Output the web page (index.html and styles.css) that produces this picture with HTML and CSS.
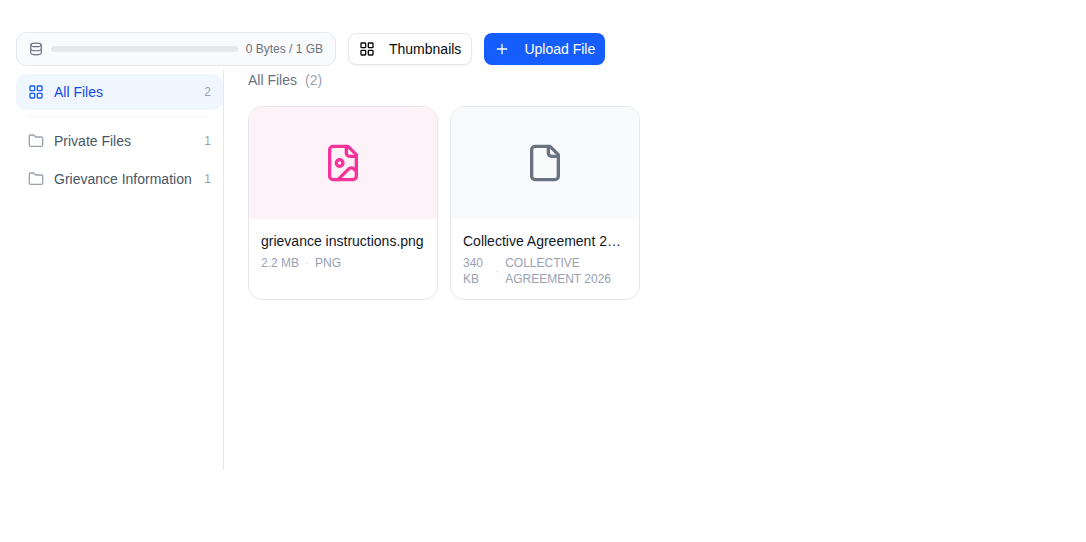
FILE: index.html
```html
<!DOCTYPE html>
<html lang="en">
<head>
<meta charset="utf-8">
<title>Files</title>
<link rel="stylesheet" href="styles.css">
</head>
<body>
<svg class="sprite" aria-hidden="true">
  <symbol id="grid" viewBox="0 0 24 24"><rect width="7" height="7" x="3" y="3" rx="1"/><rect width="7" height="7" x="14" y="3" rx="1"/><rect width="7" height="7" x="14" y="14" rx="1"/><rect width="7" height="7" x="3" y="14" rx="1"/></symbol>
  <symbol id="folder" viewBox="0 0 24 24"><path d="M20 20a2 2 0 0 0 2-2V8a2 2 0 0 0-2-2h-7.900a2 2 0 0 1-1.690-.9L9.600 3.900A2 2 0 0 0 7.930 3H4a2 2 0 0 0-2 2v13a2 2 0 0 0 2 2Z"/></symbol>
</svg>
<header class="toolbar">
  <div class="storage">
    <svg class="icon icon-small" viewBox="0 0 24 24"><ellipse cx="12" cy="5" rx="9" ry="3"/><path d="M3 5v14a9 3 0 0 0 18 0V5"/><path d="M3 12a9 3 0 0 0 18 0"/></svg>
    <div class="meter" role="progressbar" aria-label="Storage used" aria-valuenow="0"></div>
    <span class="storage-text">0 Bytes / 1 GB</span>
  </div>
  <button class="button" type="button"><svg class="icon"><use href="#grid"/></svg>Thumbnails</button>
  <button class="button button-primary" type="button"><svg class="icon" viewBox="0 0 24 24"><path d="M5 12h14M12 5v14"/></svg>Upload File</button>
</header>
<div class="browser">
  <nav class="sidebar" aria-label="Folders">
    <button class="folder folder-active" type="button"><svg class="icon"><use href="#grid"/></svg><span class="folder-name">All Files</span><span class="count">2</span></button>
    <hr class="divider">
    <button class="folder" type="button"><svg class="icon"><use href="#folder"/></svg><span class="folder-name">Private Files</span><span class="count">1</span></button>
    <button class="folder" type="button"><svg class="icon"><use href="#folder"/></svg><span class="folder-name">Grievance Information</span><span class="count">1</span></button>
  </nav>
  <main class="content">
    <h1 class="heading">All Files <span class="total">(2)</span></h1>
    <div class="cards">
      <article class="card">
        <div class="preview preview-image"><svg class="icon icon-large" viewBox="0 0 24 24"><path d="M15 2H6a2 2 0 0 0-2 2v16a2 2 0 0 0 2 2h12a2 2 0 0 0 2-2V7Z"/><path d="M14 2v4a2 2 0 0 0 2 2h4"/><circle cx="10" cy="12" r="2"/><path d="m20 17-1.296-1.296a2.410 2.410 0 0 0-3.408 0L9 22"/></svg></div>
        <div class="info">
          <h2 class="name">grievance instructions.png</h2>
          <div class="meta"><span>2.2 MB</span><span class="dot">·</span><span>PNG</span></div>
        </div>
      </article>
      <article class="card">
        <div class="preview"><svg class="icon icon-large" viewBox="0 0 24 24"><path d="M15 2H6a2 2 0 0 0-2 2v16a2 2 0 0 0 2 2h12a2 2 0 0 0 2-2V7Z"/><path d="M14 2v4a2 2 0 0 0 2 2h4"/></svg></div>
        <div class="info">
          <h2 class="name">Collective Agreement 2026</h2>
          <div class="meta"><span>340 KB</span><span class="dot">·</span><span>COLLECTIVE AGREEMENT 2026</span></div>
        </div>
      </article>
    </div>
  </main>
</div>
</body>
</html>
```
FILE: styles.css
```css
* { box-sizing: border-box; }

body {
  margin: 0;
  padding: 32px 16px;
  background: #fff;
  color: #101828;
  font: 14px/20px "Liberation Sans", Arial, sans-serif;
}

button { font: inherit; cursor: pointer; }

.sprite { display: none; }

.icon {
  flex: none;
  width: 16px;
  height: 16px;
  fill: none;
  stroke: currentColor;
  stroke-width: 2;
  stroke-linecap: round;
  stroke-linejoin: round;
}
.icon-small { width: 14px; height: 14px; }
.icon-large { width: 40px; height: 40px; }

.toolbar {
  display: flex;
  align-items: center;
  gap: 12px;
  margin-bottom: 4px;
}

.storage {
  display: flex;
  align-items: center;
  gap: 8px;
  width: 320px;
  padding: 8px 12px;
  border: 1px solid #e5e7eb;
  border-radius: 10px;
  background: #f9fafb;
  color: #6a7282;
}
.meter {
  flex: 1;
  height: 6px;
  border-radius: 3px;
  background: #e5e7eb;
}
.storage-text { font-size: 12px; line-height: 16px; }

.button {
  display: flex;
  align-items: center;
  gap: 14px;
  height: 32px;
  padding: 0 10px;
  border: 1px solid #e5e7eb;
  border-radius: 8px;
  background: #fff;
  color: #0a0a0a;
  box-shadow: 0 1px 2px rgba(0, 0, 0, 0.05);
}
.button-primary {
  border: 0;
  background: #155dfc;
  color: #fff;
}

.browser { display: flex; }

.sidebar {
  display: flex;
  flex: none;
  flex-direction: column;
  width: 208px;
  min-height: 400px;
  padding-top: 4px;
  border-right: 1px solid #e5e7eb;
}
.folder {
  display: flex;
  align-items: center;
  gap: 10px;
  margin-bottom: 2px;
  padding: 8px 12px;
  border: 0;
  border-radius: 10px;
  background: none;
  color: #4a5565;
  text-align: left;
}
.folder .icon { color: #99a1af; }
.folder-active { margin-bottom: 0; background: #eff6ff; color: #1447e6; }
.folder-active .icon { color: #155dfc; }
.folder-name { flex: 1; white-space: nowrap; }
.count { color: #99a1af; font-size: 12px; }
.divider {
  width: auto;
  margin: 6px 12px;
  border: 0;
  border-top: 1px solid #f3f4f6;
}

.content { flex: 1; min-width: 0; padding-left: 24px; }
.heading {
  display: flex;
  gap: 8px;
  margin: 0 0 16px;
  color: #6a7282;
  font-size: 14px;
  font-weight: 400;
}
.total { color: #99a1af; }

.cards { display: flex; flex-wrap: wrap; gap: 12px; }
.card {
  width: 190px;
  overflow: hidden;
  border: 1px solid #e5e7eb;
  border-radius: 14px;
}
.preview {
  display: flex;
  align-items: center;
  justify-content: center;
  height: 112px;
  background: #f9fafb;
  color: #6a7282;
}
.preview-image { background: #fdf2f8; color: #f6339a; }
.info { padding: 12px; }
.name {
  overflow: hidden;
  margin: 0 0 4px;
  font-size: 14px;
  font-weight: 400;
  text-overflow: ellipsis;
  white-space: nowrap;
}
.meta {
  display: flex;
  align-items: center;
  gap: 6px;
  color: #99a1af;
  font-size: 12px;
  line-height: 16px;
}
.dot { color: #d1d5dc; }
```
